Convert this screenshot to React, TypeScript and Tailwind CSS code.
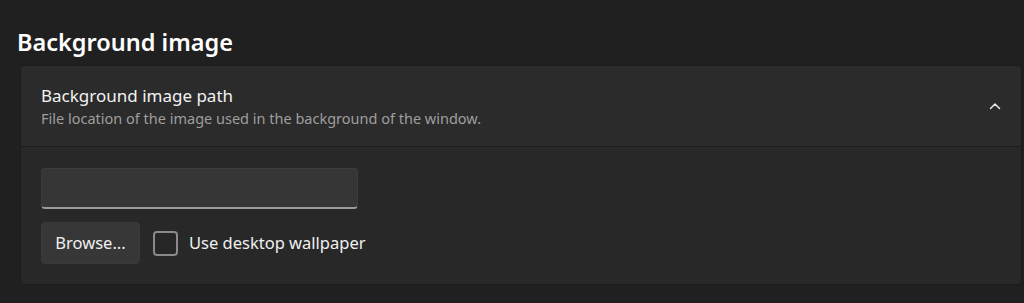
const ChevronUp = () => (
  <svg width="12" height="8" viewBox="0 0 12 8" fill="none">
    <path d="M1.5 6.5L6 2L10.5 6.5" stroke="#e6e6e6" strokeWidth="1.5" strokeLinecap="round" strokeLinejoin="round" />
  </svg>
);

export default function App() {
  return (
    <div
      className="w-[1024px] h-[303px] overflow-hidden bg-[#202020] text-white"
      style={{ fontFamily: '"Segoe UI", "Noto Sans", "Open Sans", sans-serif' }}
    >
      <h2 className="pl-[17px] pt-[27px] text-[23.5px] leading-[30px] font-semibold text-white">
        Background image
      </h2>

      <div className="ml-[20px] mr-[2px] mt-[8px] rounded-[4px] border border-[#1c1c1c] overflow-hidden">
        {/* header */}
        <div className="h-[81px] bg-[#2b2b2b] flex items-center justify-between pl-[20px] pr-[20px] border-b border-[#1d1d1d]">
          <div className="flex flex-col">
            <span className="text-[17px] leading-[24px] text-[#f2f2f2]">
              Background image path
            </span>
            <span className="text-[14.5px] leading-[20px] text-[#9e9e9e]">
              File location of the image used in the background of the window.
            </span>
          </div>
          <ChevronUp />
        </div>

        {/* content */}
        <div className="bg-[#282828] pl-[20px] pt-[21px] pb-[20px]">
          <div className="w-[317px] h-[41px] rounded-[4px] bg-[#363636] border border-[#3c3c3c] border-b-2 border-b-[#9a9a9a]" />
          <div className="flex items-center mt-[13px]">
            <button
              type="button"
              className="w-[99px] h-[42px] rounded-[4px] bg-[#373737] border border-[#3a3a3a] text-[16.5px] text-[#f0f0f0]"
            >
              Browse...
            </button>
            <div className="ml-[13px] w-[25px] h-[25px] rounded-[4px] border-2 border-[#8a8a8a] bg-[#272727]" />
            <span className="ml-[11px] text-[16.5px] text-[#f0f0f0]">
              Use desktop wallpaper
            </span>
          </div>
        </div>
      </div>
    </div>
  );
}
